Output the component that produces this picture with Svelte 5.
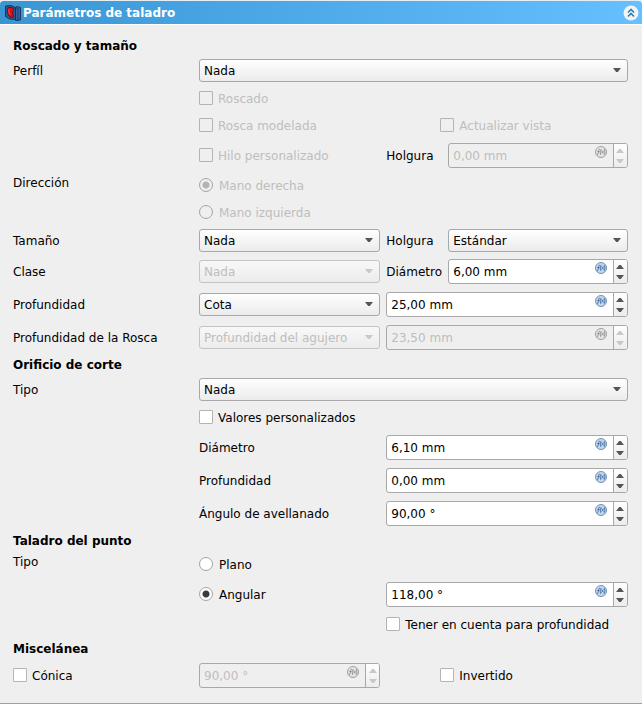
<script>
  let custom = $state(false);
  let point = $state('angular');
  let collapsed = $state(false);
</script>

{#snippet combo(id, label, value, disabled = false)}
  <div class="combo" class:off={disabled}>
    <select {id} {disabled} aria-label={label}>
      <option>{value}</option>
    </select>
    <svg class="arrow" width="8" height="4" viewBox="0 0 8 4" aria-hidden="true"><path d="M0 0H8L4.800 4H3.200Z" /></svg>
  </div>
{/snippet}

{#snippet spin(id, label, value, disabled = false)}
  <div class="spin" class:off={disabled}>
    <input {id} type="text" {value} {disabled} aria-label={label} />
    <button class="fx" type="button" {disabled} aria-label="Expresión">
      <svg width="12" height="12" viewBox="0 0 12 12" aria-hidden="true">
        <circle class="disc" cx="6" cy="6" r="5.500" />
        <path class="sign" d="M1.800 8.800Q2.900 9 3.200 7L3.700 4.200Q3.900 3 5 3.300M2.300 5.500H4.600M6.100 3.100Q4.500 6 5.700 8.800M6.500 4.500L8.700 7.500M8.700 4.500L6.500 7.500M9.300 3.100Q10.700 6 9.200 8.800" />
      </svg>
    </button>
    <div class="steps">
      <button type="button" {disabled} aria-label="Aumentar"><svg width="8" height="4" viewBox="0 0 8 4"><path d="M3.200 0H4.800L8 4H0Z" /></svg></button>
      <button type="button" {disabled} aria-label="Disminuir"><svg width="8" height="4" viewBox="0 0 8 4"><path d="M0 0H8L4.800 4H3.200Z" /></svg></button>
    </div>
  </div>
{/snippet}

<section class="panel">
  <header>
    <svg class="logo" width="16" height="16" viewBox="0 0 16 16" aria-hidden="true">
      <path d="M.5 1L6 .5L10.500 2.500V14.500L4.500 14L.5 11.500Z" fill="#2c5a96" stroke="#10284c" stroke-width=".8" />
      <path d="M10.500 2.500L12 1.500L15.500 2.500V15L10.500 15.500Z" fill="#3465a4" stroke="#10284c" stroke-width=".8" />
      <path d="M10.500 2.500L13 3.500V15.500" fill="none" stroke="#10284c" stroke-width=".6" />
      <path d="M3 2.500Q6 1.500 8.800 3.500Q6.500 7.500 8.800 12Q6 13.500 3.500 10.500Q1.200 6 3 2.500Z" fill="#d8101a" stroke="#4a0a14" stroke-width=".7" />
      <path d="M4 4Q3 7 5 10" fill="none" stroke="#ff4a4a" />
    </svg>
    <h1>Parámetros de taladro</h1>
    <button class="toggle" type="button" aria-label="Contraer" aria-expanded={!collapsed} onclick={() => (collapsed = !collapsed)}>
      <svg width="16" height="16" viewBox="0 0 16 16" aria-hidden="true">
        <circle cx="8" cy="8" r="7.500" fill="#f3f3f3" />
        <path d="M5 7.500L8 4.500L11 7.500M5 11.500L8 8.500L11 11.500" fill="none" stroke="#2b80b8" stroke-width="1.700" />
      </svg>
    </button>
  </header>

  {#if !collapsed}
    <form>
      <h2>Roscado y tamaño</h2>
      <div class="row">
        <label for="perfil">Perfíl</label>
        <div class="wide">{@render combo('perfil', 'Perfíl', 'Nada')}</div>
      </div>
      <div class="row check">
        <label class="opt second off"><input type="checkbox" disabled />Roscado</label>
      </div>
      <div class="row check">
        <label class="opt second off"><input type="checkbox" disabled />Rosca modelada</label>
        <label class="opt inset off"><input type="checkbox" disabled />Actualizar vista</label>
      </div>
      <div class="row tall">
        <label class="opt second off"><input type="checkbox" disabled />Hilo personalizado</label>
        <div class="pair">
          <label for="holgura-hilo">Holgura</label>
          {@render spin('holgura-hilo', 'Holgura', '0,00 mm', true)}
        </div>
      </div>
      <div class="row check">
        <span class="top">Dirección</span>
        <label class="opt radio off"><input type="radio" name="dir" checked disabled />Mano derecha</label>
      </div>
      <div class="row check">
        <label class="opt radio second off"><input type="radio" name="dir" disabled />Mano izquierda</label>
      </div>
      <div class="row">
        <label for="tamano">Tamaño</label>
        {@render combo('tamano', 'Tamaño', 'Nada')}
        <div class="pair">
          <label for="holgura">Holgura</label>
          {@render combo('holgura', 'Holgura', 'Estándar')}
        </div>
      </div>
      <div class="row tall">
        <label for="clase">Clase</label>
        {@render combo('clase', 'Clase', 'Nada', true)}
        <div class="pair">
          <label for="diametro">Diámetro</label>
          {@render spin('diametro', 'Diámetro', '6,00 mm')}
        </div>
      </div>
      <div class="row tall">
        <label for="profundidad">Profundidad</label>
        {@render combo('profundidad', 'Profundidad', 'Cota')}
        {@render spin('profundidad-valor', 'Profundidad', '25,00 mm')}
      </div>
      <div class="row tall">
        <label for="prof-rosca">Profundidad de la Rosca</label>
        {@render combo('prof-rosca', 'Profundidad de la Rosca', 'Profundidad del agujero', true)}
        {@render spin('prof-rosca-valor', 'Profundidad de la Rosca', '23,50 mm', true)}
      </div>

      <h2>Orificio de corte</h2>
      <div class="row">
        <label for="tipo">Tipo</label>
        <div class="wide">{@render combo('tipo', 'Tipo', 'Nada')}</div>
      </div>
      <div class="row check">
        <label class="opt second"><input type="checkbox" bind:checked={custom} />Valores personalizados</label>
      </div>
      <div class="row tall">
        <label class="second" for="corte-diametro">Diámetro</label>
        {@render spin('corte-diametro', 'Diámetro', '6,10 mm')}
      </div>
      <div class="row tall">
        <label class="second" for="corte-profundidad">Profundidad</label>
        {@render spin('corte-profundidad', 'Profundidad', '0,00 mm')}
      </div>
      <div class="row tall">
        <label class="second" for="corte-angulo">Ángulo de avellanado</label>
        {@render spin('corte-angulo', 'Ángulo de avellanado', '90,00 °')}
      </div>

      <h2>Taladro del punto</h2>
      <div class="row check">
        <span class="top">Tipo</span>
        <label class="opt radio"><input type="radio" name="punto" value="plano" bind:group={point} />Plano</label>
      </div>
      <div class="row tall">
        <label class="opt radio second"><input type="radio" name="punto" value="angular" bind:group={point} />Angular</label>
        {@render spin('punto-angulo', 'Angular', '118,00 °')}
      </div>
      <div class="row check">
        <label class="opt third"><input type="checkbox" />Tener en cuenta para profundidad</label>
      </div>

      <h2>Miscelánea</h2>
      <div class="row tall">
        <label class="opt"><input type="checkbox" />Cónica</label>
        {@render spin('conica', 'Cónica', '90,00 °', true)}
        <label class="opt inset"><input type="checkbox" />Invertido</label>
      </div>
    </form>
  {/if}
</section>

<style>
  :global(body) {
    margin: 0;
    background: #efefef;
  }
  .panel {
    background: #efefef;
    border-bottom: 1px solid #a0a0a0;
    color: #000;
    font: 12px/15px 'DejaVu Sans', sans-serif;
  }
  header {
    display: flex;
    align-items: center;
    gap: 2px;
    height: 23px;
    padding: 0 3px 0 5px;
    border-top: 1px solid #e4eef5;
    border-bottom: 1px solid #fff;
    border-radius: 4px 4px 0 0;
    background: linear-gradient(90deg, #3996d3, #66bfff);
  }
  h1,
  h2 {
    margin: 0;
    font-size: 12px;
    line-height: 17px;
  }
  h1 {
    flex: 1;
    padding-top: 2px;
    color: #fff;
  }
  h2 {
    height: 15px;
  }
  button {
    margin: 0;
    padding: 0;
    border: 0;
    background: none;
  }
  svg {
    display: block;
  }
  form {
    display: flex;
    flex-direction: column;
    gap: 6px;
    padding: 13px 14px 14px 13px;
  }
  .row {
    display: grid;
    grid-template-columns: 180px 3fr 4fr;
    column-gap: 6px;
    align-items: center;
    min-height: 23px;
  }
  .check {
    min-height: 21px;
  }
  .tall {
    min-height: 27px;
  }
  label {
    padding-top: 2px;
  }
  .wide {
    grid-column: 2 / 4;
  }
  .second {
    grid-column: 2;
  }
  .third {
    grid-column: 3;
  }
  .top {
    align-self: start;
    line-height: 17px;
  }
  .inset {
    grid-column: 3;
    padding-left: 54px;
  }
  .pair {
    display: grid;
    grid-template-columns: 56px 1fr;
    column-gap: 6px;
    align-items: center;
  }
  .opt {
    display: flex;
    align-items: flex-start;
    gap: 5px;
    line-height: 17px;
  }
  .radio {
    gap: 6px;
  }
  .off {
    color: #bebebe;
  }
  .opt input {
    appearance: none;
    flex: none;
    box-sizing: border-box;
    width: 14px;
    height: 14px;
    margin: 0;
    border: 1px solid #b4b4b4;
    border-radius: 1px;
    background: #fff;
  }
  .opt input:disabled {
    background: #efefef;
  }
  .opt input[type='checkbox']:checked {
    background: #444;
    box-shadow: inset 0 0 0 3px #fff;
  }
  .opt input[type='radio'] {
    border-color: #a4a4a4;
    border-radius: 50%;
  }
  .opt input[type='radio']:checked {
    background: radial-gradient(circle, #3c3c3c 3px, #fff 4px);
  }
  .opt input[type='radio']:checked:disabled {
    background: radial-gradient(circle, #b4b4b4 3px, #efefef 4px);
  }
  .combo {
    position: relative;
    min-width: 0;
  }
  select {
    appearance: none;
    display: block;
    box-sizing: border-box;
    width: 100%;
    height: 23px;
    margin: 0;
    padding: 2px 20px 0 4px;
    border: 1px solid #a8a8a8;
    border-radius: 3px;
    background: linear-gradient(#fefefe, #ececec);
    color: #000;
    font: inherit;
  }
  select:disabled {
    border-color: #c4c4c4;
    background: linear-gradient(#f8f8f8, #ececec);
    color: #bebebe;
    opacity: 1;
  }
  .arrow {
    position: absolute;
    top: 9px;
    right: 7px;
    pointer-events: none;
    fill: #555;
  }
  .off .arrow,
  .off .steps {
    fill: #c8c8c8;
  }
  .spin {
    position: relative;
    display: flex;
    box-sizing: border-box;
    min-width: 0;
    height: 25px;
    overflow: hidden;
    border: 1px solid #a8a8a8;
    border-radius: 3px;
    background: #fff;
  }
  .spin.off {
    background: #efefef;
  }
  .spin input {
    flex: 1;
    min-width: 0;
    margin: 0;
    padding: 2px 24px 0 4px;
    border: 0;
    background: none;
    color: #000;
    font: inherit;
  }
  .spin input:disabled {
    color: #bebebe;
  }
  .fx {
    position: absolute;
    top: 2px;
    right: 20px;
  }
  .disc {
    fill: #c3d7ec;
    stroke: #7192b8;
  }
  .sign {
    fill: none;
    stroke: #3a639c;
    stroke-width: 0.8;
  }
  .off .disc {
    fill: #e4e4e4;
    stroke: #a0a0a0;
  }
  .off .sign {
    stroke: #858585;
  }
  .steps {
    display: flex;
    flex-direction: column;
    justify-content: center;
    gap: 6px;
    width: 13px;
    border-left: 1px solid #a8a8a8;
    background: linear-gradient(#fefefe, #ececec);
    fill: #555;
  }
  .steps button {
    display: flex;
    justify-content: center;
  }
</style>
